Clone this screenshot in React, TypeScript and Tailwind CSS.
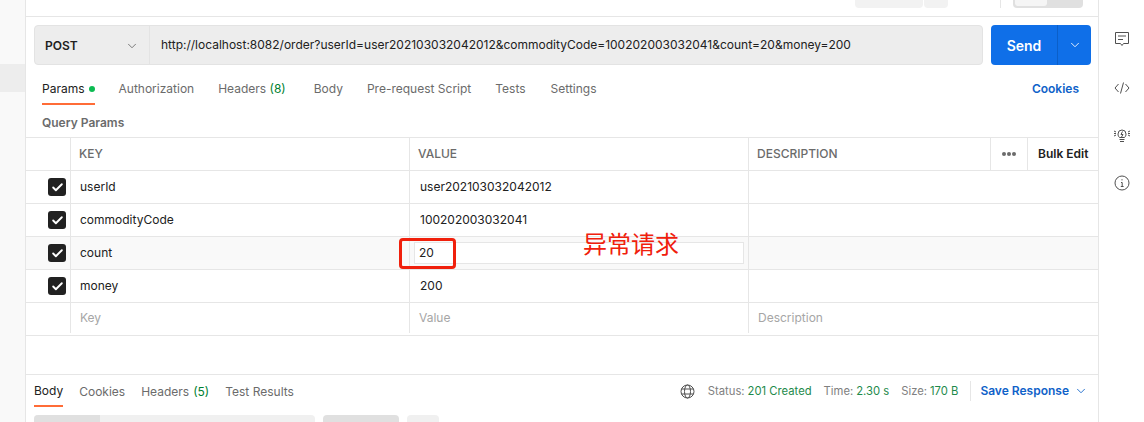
import { ChevronDown, Check } from "lucide-react";

const rows = [
  { key: "userId", value: "user202103032042012" },
  { key: "commodityCode", value: "100202003032041" },
  { key: "count", value: "20", active: true },
  { key: "money", value: "200" },
];

function App() {
  return (
    <div
      className="relative flex h-[422px] w-[1144px] overflow-hidden bg-white text-[12px] text-[#212121]"
      style={{ fontFamily: 'Inter, "Noto Sans CJK SC", sans-serif' }}
    >
      {/* left sidebar */}
      <div className="w-[26px] shrink-0 border-r border-[#e6e6e6] bg-[#f9f9f9] pt-[64px]">
        <div className="h-[28px] bg-[#ededed]" />
      </div>

      {/* main */}
      <div className="flex w-[1072px] shrink-0 flex-col">
        <div className="flex h-[17px] shrink-0 items-start border-b border-[#e6e6e6]">
          <div className="ml-[829px] h-[8px] w-[68px] rounded-b-[4px] bg-[#f2f2f2]" />
          <div className="ml-px h-[8px] w-[24px] rounded-b-[4px] bg-[#f2f2f2]" />
          <div className="ml-[52px] h-[8px] w-px bg-[#e6e6e6]" />
          <div className="ml-[12px] h-[8px] w-[70px] rounded-b-[4px] bg-[#e0e0e0] px-[2px]">
            <div className="h-[6px] w-[32px] rounded-b-[3px] bg-[#f5f5f5]" />
          </div>
        </div>

        {/* request bar */}
        <div className="mt-[8px] flex h-[40px] shrink-0 pr-[7px] pl-[8px]">
          <div className="flex w-[949px] rounded-[4px] border border-[#e3e3e3] bg-[#ededed]">
            <div className="flex w-[115px] items-center justify-between border-r border-[#e3e3e3] px-[10px] pt-[1px] font-semibold text-[#212121]">
              POST
              <ChevronDown size={14} strokeWidth={1.25} className="text-[#505050]" />
            </div>
            <div className="flex items-center pl-[11px] text-[#212121]">
              http://localhost:8082/order?userId=user202103032042012&amp;commodityCode=100202003032041&amp;count=20&amp;money=200
            </div>
          </div>
          <div className="ml-[8px] flex w-[100px] rounded-[4px] bg-[#0f6fe8] text-white">
            <div className="flex w-[67px] items-center justify-center border-r border-[#0b5fc9] text-[14px] font-semibold">
              Send
            </div>
            <div className="flex flex-1 items-center justify-center">
              <ChevronDown size={14} strokeWidth={1.5} />
            </div>
          </div>
        </div>

        {/* request tabs */}
        <div className="mt-[13px] flex h-[27px] shrink-0 justify-between pr-[19px] pl-[16px]">
          <div className="flex text-[#6b6b6b]">
            <div className="flex h-[27px] items-center gap-[4px] border-b-2 border-[#ff6c37] pb-[3px] text-[#212121]">
              Params
              <span className="h-[6px] w-[6px] rounded-full bg-[#0cbb52]" />
            </div>
            <div className="ml-[24px] pt-[2px]">Authorization</div>
            <div className="ml-[24px] pt-[2px]">
              Headers <span className="text-[#007f31]">(8)</span>
            </div>
            <div className="ml-[28px] pt-[2px]">Body</div>
            <div className="ml-[24px] pt-[2px]">Pre-request Script</div>
            <div className="ml-[24px] pt-[2px]">Tests</div>
            <div className="ml-[25px] pt-[2px]">Settings</div>
          </div>
          <div className="pt-[2px] font-semibold text-[#0f62c9]">Cookies</div>
        </div>

        <div className="flex h-[32px] shrink-0 items-center pt-[3px] pl-[16px] font-semibold text-[#6b6b6b]">
          Query Params
        </div>

        {/* params table */}
        <div className="border-t border-[#e6e6e6]">
          <div className="flex h-[33px] border-b border-[#e6e6e6] font-medium text-[#6b6b6b]">
            <div className="w-[45px] border-r border-[#e6e6e6]" />
            <div className="flex w-[339px] items-center border-r border-[#e6e6e6] pl-[8px]">KEY</div>
            <div className="flex w-[339px] items-center border-r border-[#e6e6e6] pl-[8px]">VALUE</div>
            <div className="flex w-[242px] items-center border-r border-[#e6e6e6] pl-[8px]">DESCRIPTION</div>
            <div className="flex w-[37px] items-center justify-center gap-[1px] border-r border-[#e6e6e6]">
              <span className="h-[4px] w-[4px] rounded-full bg-[#6b6b6b]" />
              <span className="h-[4px] w-[4px] rounded-full bg-[#6b6b6b]" />
              <span className="h-[4px] w-[4px] rounded-full bg-[#6b6b6b]" />
            </div>
            <div className="flex flex-1 items-center pl-[10px] font-semibold text-[#212121]">Bulk Edit</div>
          </div>
          {rows.map((row) => (
            <div
              key={row.key}
              className={`flex h-[33px] border-b border-[#e6e6e6] ${row.active ? "bg-[#f9f9f9]" : ""}`}
            >
              <div className="flex w-[45px] items-center justify-end border-r border-[#e6e6e6] pr-[4px]">
                <span className="flex h-[18px] w-[18px] items-center justify-center rounded-[3px] bg-[#212121] text-white">
                  <Check size={13} strokeWidth={3.5} />
                </span>
              </div>
              <div className="flex w-[339px] items-center border-r border-[#e6e6e6] pl-[9px]">{row.key}</div>
              <div className="flex w-[339px] items-center border-r border-[#e6e6e6] pl-[10px]">
                {row.active ? (
                  <div className="-ml-[6px] flex h-[22px] w-[330px] items-center border border-[#e6e6e6] bg-white pl-[4px]">
                    {row.value}
                  </div>
                ) : (
                  row.value
                )}
              </div>
              <div className="flex-1" />
            </div>
          ))}
          <div className="flex h-[33px] border-b border-[#e6e6e6] pb-[2px] text-[#a6a6a6]">
            <div className="w-[45px] border-r border-[#e6e6e6]" />
            <div className="flex w-[339px] items-center border-r border-[#e6e6e6] pl-[9px]">Key</div>
            <div className="flex w-[339px] items-center border-r border-[#e6e6e6] pl-[9px]">Value</div>
            <div className="flex flex-1 items-center pl-[9px]">Description</div>
          </div>
        </div>

        {/* response */}
        <div className="mt-[38px] flex h-[32px] shrink-0 justify-between border-t border-[#e6e6e6] pr-[10px] pl-[8px]">
          <div className="flex gap-[16px] text-[#6b6b6b]">
            <div className="flex h-[32px] items-center border-b-2 border-[#ff6c37] pt-[1px] text-[#212121]">Body</div>
            <div className="flex h-[32px] items-center pt-[1px]">Cookies</div>
            <div className="flex h-[32px] items-center gap-[4px] pt-[1px]">
              Headers <span className="text-[#007f31]">(5)</span>
            </div>
            <div className="flex h-[32px] items-center pt-[1px]">Test Results</div>
          </div>
          <div className="flex h-[32px] items-center text-[11.25px] text-[#808080]">
            <svg
              width="15"
              height="15"
              viewBox="0 0 15 15"
              fill="none"
              stroke="#505050"
              strokeWidth="1"
              className="mr-[13px]"
            >
              <circle cx="7.5" cy="7.5" r="6.5" />
              <ellipse cx="7.5" cy="7.5" rx="3" ry="6.5" />
              <path d="M1.5 5h12M1.5 10h12" />
            </svg>
            Status:<span className="ml-[3px] text-[#1e8a4b]">201 Created</span>
            <span className="ml-[12px]">Time:</span>
            <span className="ml-[3px] text-[#1e8a4b]">2.30 s</span>
            <span className="ml-[12px]">Size:</span>
            <span className="ml-[3px] text-[#1e8a4b]">170 B</span>
            <span className="ml-[12px] h-[20px] w-px bg-[#e6e6e6]" />
            <span className="ml-[9px] text-[12px] font-semibold text-[#0f62c9]">Save Response</span>
            <ChevronDown size={14} strokeWidth={1.5} className="ml-[5px] text-[#0f62c9]" />
          </div>
        </div>
        <div className="mt-[9px] flex gap-[8px] pl-[8px]">
          <div className="h-[8px] w-[281px] rounded-t-[4px] bg-[#f0f0f0]">
            <div className="h-[8px] w-[66px] rounded-tl-[4px] bg-[#e0e0e0]" />
          </div>
          <div className="h-[8px] w-[76px] rounded-t-[4px] bg-[#e0e0e0]" />
          <div className="h-[8px] w-[32px] rounded-t-[4px] bg-[#f0f0f0]" />
        </div>
      </div>

      {/* right rail */}
      <div className="flex flex-1 flex-col items-center gap-[32px] border-l border-[#e6e6e6] pt-[31px] text-[#505050]">
        <svg width="16" height="16" viewBox="0 0 16 16" fill="none" stroke="currentColor" strokeWidth="1">
          <path d="M1.5 1.5h13v11H9.5L8 14.5 6.5 12.5h-5zM4 5h8M4 8.5h5" />
        </svg>
        <svg width="16" height="16" viewBox="0 -1 16 16" fill="none" stroke="currentColor" strokeWidth="1">
          <path d="M4.5 4 1 8l3.5 4M11.5 4 15 8l-3.5 4M9.5 2.5l-3 11" />
        </svg>
        <svg width="16" height="16" viewBox="0 0 16 16" fill="none" stroke="currentColor" strokeWidth="1">
          <path d="M5.5 10.5C4.5 9.5 4 8.5 4 7a4 4 0 0 1 8 0c0 1.5-.5 2.5-1.5 3.5zM5.5 12.5h5M6 14.5h4M8.5 4.5 7 7.5h2L7.5 10M0 4l2 1M16 4l-2 1M0 9l2-1M16 9l-2-1M0 6.5h2M14 6.5h2" />
        </svg>
        <svg width="16" height="16" viewBox="0 0 16 16" fill="none" stroke="currentColor" strokeWidth="1">
          <circle cx="8" cy="8" r="7" />
          <path d="M7 7.5h1.2v4M6.8 11.5h2.8M8 4.2v1.2" />
        </svg>
      </div>

      {/* red annotation over the screenshot */}
      <div className="absolute top-[238px] left-[399px] h-[31px] w-[57px] rounded-[4px] border-[3px] border-[#f0200c]" />
      <div className="absolute top-[231px] left-[583px] text-[24px] leading-[28px] text-[#f0200c]">异常请求</div>
    </div>
  );
}

export default App;
